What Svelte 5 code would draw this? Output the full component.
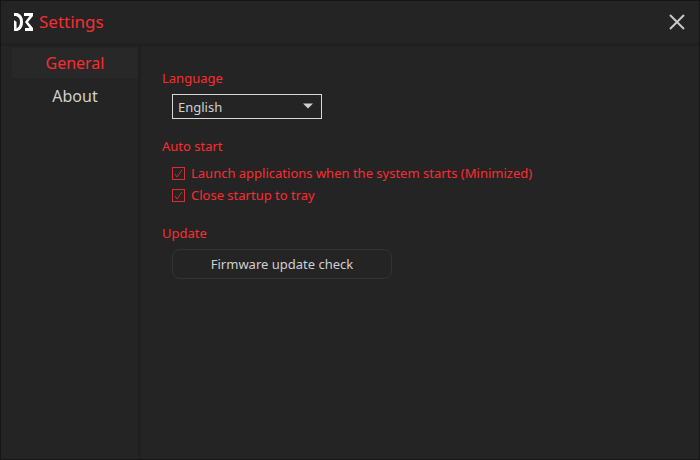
<script>
	let tab = 'General';
	let language = 'English';
	let autoStart = true;
	let closeToTray = true;

	const tabs = ['General', 'About'];
	const languages = ['English', '한국어', '日本語'];
</script>

<div class="window">
	<header>
		<svg class="logo" viewBox="0 0 20 18" aria-hidden="true">
			<path d="M0 0h3c4 1 6 4.500 6 9s-2 8-6 9H0V7l2.500 2v6.500C5 14 6 12 6 9S5 4 2 3H0z" />
			<path d="M10 0h9v3L14 9l5 6v3h-8v-3h4.500L11 9l4.500-6H10z" />
		</svg>
		<h1>Settings</h1>
		<button class="close" aria-label="Close">
			<svg viewBox="0 0 16 16"><path d="M1 1L15 15M15 1L1 15" /></svg>
		</button>
	</header>

	<div class="body">
		<nav>
			{#each tabs as name}
				<button class="tab" class:active={tab === name} on:click={() => tab = name}>{name}</button>
			{/each}
		</nav>

		<main>
			<section>
				<h2><label for="language">Language</label></h2>
				<div class="select">
					<select id="language" bind:value={language}>
						{#each languages as item}
							<option>{item}</option>
						{/each}
					</select>
					<svg viewBox="0 0 10 5" aria-hidden="true"><path d="M0 0h10L5 5z" /></svg>
				</div>
			</section>

			<section>
				<h2>Auto start</h2>
				<label class="check">
					<input type="checkbox" bind:checked={autoStart} />
					<svg viewBox="0 0 13 13" aria-hidden="true"><path d="M3 7l2 3 5-7" /></svg>
					<span>Launch applications when the system starts (Minimized)</span>
				</label>
				<label class="check">
					<input type="checkbox" bind:checked={closeToTray} />
					<svg viewBox="0 0 13 13" aria-hidden="true"><path d="M3 7l2 3 5-7" /></svg>
					<span>Close startup to tray</span>
				</label>
			</section>

			<section>
				<h2>Update</h2>
				<button class="update">Firmware update check</button>
			</section>
		</main>
	</div>
</div>

<style>
	:global(body) {
		background: #242424;
	}

	.window {
		box-sizing: border-box;
		min-height: 100vh;
		display: flex;
		flex-direction: column;
		border: 1px solid #151515;
		background: #242424;
		color: #d0d0d0;
		font-family: "Noto Sans", "Noto Sans CJK KR", sans-serif;
		font-size: 13px;
	}

	button, select {
		font: inherit;
		color: inherit;
		background: none;
		border: none;
		padding: 0;
		margin: 0;
		cursor: pointer;
	}

	header {
		display: flex;
		align-items: center;
		height: 42px;
		padding: 0 14px 0 13px;
		border-bottom: 3px solid #202020;
	}

	.logo {
		width: 20px;
		height: 18px;
		fill: #fff;
	}

	h1 {
		flex: 1;
		margin: 0 0 0 5px;
		color: #fb2c31;
		font-size: 17px;
		font-weight: 400;
		line-height: 24px;
	}

	.close {
		display: flex;
	}

	.close svg {
		width: 16px;
		height: 16px;
		fill: none;
		stroke: #c8c8c8;
		stroke-width: 2;
	}

	.body {
		flex: 1;
		display: flex;
	}

	nav {
		width: 126px;
		padding: 2px 0 0 11px;
		border-right: 3px solid #202020;
	}

	.tab {
		display: block;
		width: 100%;
		height: 30px;
		margin-bottom: 3px;
		font-size: 16px;
	}

	.active {
		background: #282828;
		color: #fb2c31;
	}

	main {
		flex: 1;
		padding: 22px 20px 20px 21px;
	}

	section {
		margin-bottom: 17px;
	}

	h2 {
		margin: 0 0 6px;
		color: #fb2c31;
		font-size: 13px;
		font-weight: 400;
		line-height: 20px;
	}

	.select {
		position: relative;
		width: 150px;
		margin-left: 10px;
	}

	select {
		display: block;
		box-sizing: border-box;
		width: 100%;
		height: 25px;
		padding: 0 24px 0 5px;
		border: 1px solid #d8d8d8;
		border-radius: 0;
		appearance: none;
	}

	option {
		background: #242424;
	}

	.select svg {
		position: absolute;
		right: 9px;
		top: 9px;
		width: 10px;
		height: 6px;
		fill: #d0d0d0;
		pointer-events: none;
	}

	.check {
		position: relative;
		display: flex;
		align-items: center;
		gap: 6px;
		height: 22px;
		margin-left: 10px;
		color: #fb2c31;
	}

	.check input {
		appearance: none;
		box-sizing: border-box;
		width: 13px;
		height: 13px;
		margin: 0;
		border: 1px solid #d23033;
	}

	.check svg {
		display: none;
		position: absolute;
		left: 0;
		width: 13px;
		height: 13px;
		fill: none;
		stroke: #c03033;
		pointer-events: none;
	}

	.check input:checked + svg {
		display: block;
	}

	.update {
		display: block;
		width: 220px;
		height: 30px;
		margin-left: 10px;
		border: 1px solid #333;
		border-radius: 8px;
	}
</style>
